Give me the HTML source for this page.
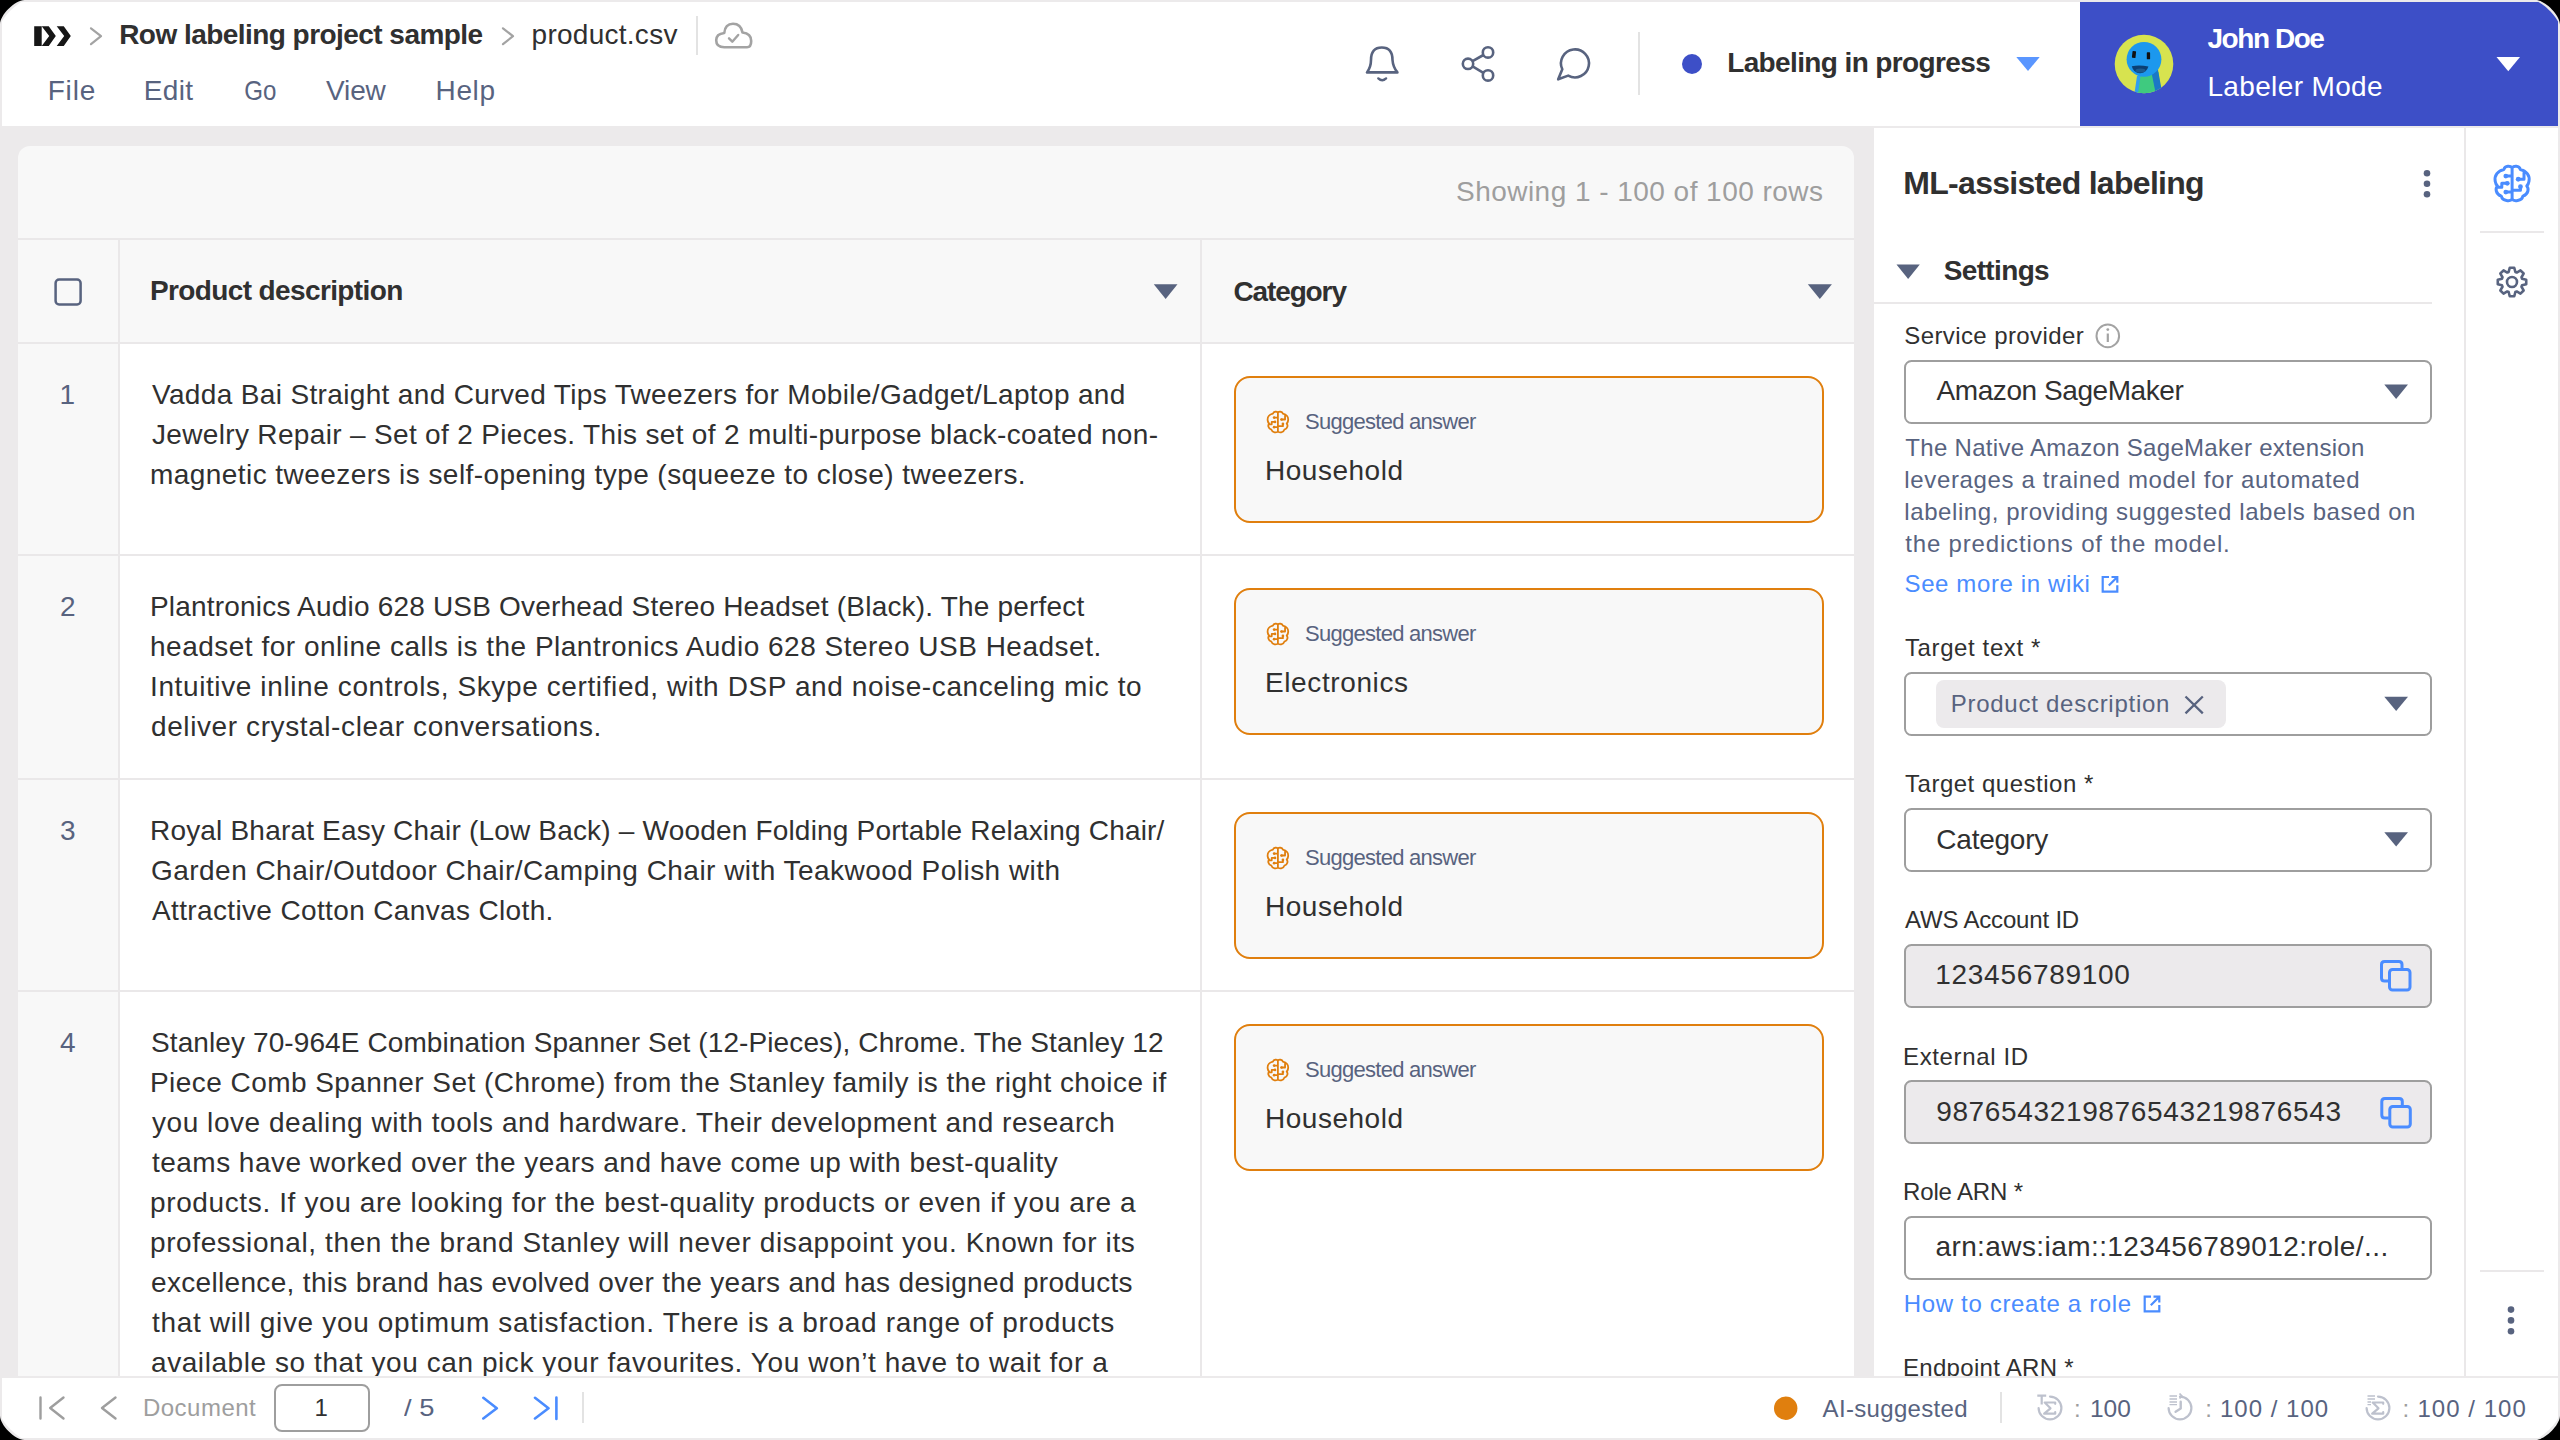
<!DOCTYPE html>
<html><head><meta charset="utf-8"><style>
html,body{margin:0;padding:0;background:#000;width:2560px;height:1440px;overflow:hidden;}
#page{position:absolute;left:0;top:0;width:2560px;height:1440px;overflow:hidden;background:#eceaeb;border-radius:0px;}
.t{position:absolute;white-space:nowrap;font-family:"Liberation Sans",sans-serif;}
svg{position:absolute;left:0;top:0;}
</style></head><body><div id="page">
<div style="position:absolute;left:2px;top:2px;width:2556px;height:124px;background:#ffffff;border-top-left-radius:0px;border-top-right-radius:0px"></div><div style="position:absolute;left:2080px;top:2px;width:478px;height:124px;background:#3d4fc7;border-top-right-radius:0px"></div><div style="position:absolute;left:18px;top:146px;width:1836px;height:1240px;background:#f8f8f8;border-top-left-radius:12px;border-top-right-radius:12px"></div><div style="position:absolute;left:120px;top:344px;width:1734px;height:1042px;background:#ffffff;"></div><div style="position:absolute;left:18px;top:238px;width:1836px;height:2px;background:#eae8e9;"></div><div style="position:absolute;left:18px;top:342px;width:1836px;height:2px;background:#eae8e9;"></div><div style="position:absolute;left:18px;top:554px;width:1836px;height:2px;background:#eae8e9;"></div><div style="position:absolute;left:18px;top:778px;width:1836px;height:2px;background:#eae8e9;"></div><div style="position:absolute;left:18px;top:990px;width:1836px;height:2px;background:#eae8e9;"></div><div style="position:absolute;left:118px;top:240px;width:2px;height:1146px;background:#eae8e9;"></div><div style="position:absolute;left:1200px;top:240px;width:2px;height:1146px;background:#eae8e9;"></div><div style="position:absolute;left:1874px;top:128px;width:684px;height:1258px;background:#ffffff;"></div><div style="position:absolute;left:2464px;top:128px;width:2px;height:1258px;background:#eae8e9;"></div><div style="position:absolute;left:1874px;top:302px;width:558px;height:2px;background:#eae8e9;"></div><div style="position:absolute;left:2480px;top:231px;width:64px;height:2px;background:#eae8e9;"></div><div style="position:absolute;left:2480px;top:1270px;width:64px;height:2px;background:#eae8e9;"></div><div style="position:absolute;left:696px;top:16px;width:2px;height:39px;background:#e3e3e3;"></div><div style="position:absolute;left:1638px;top:32px;width:2px;height:63px;background:#e3e3e3;"></div><div style="position:absolute;left:1234px;top:376px;width:590px;height:147px;box-sizing:border-box;border:2px solid #e07f0e;border-radius:16px;background:#f8f8f8"></div><div style="position:absolute;left:1234px;top:588px;width:590px;height:147px;box-sizing:border-box;border:2px solid #e07f0e;border-radius:16px;background:#f8f8f8"></div><div style="position:absolute;left:1234px;top:812px;width:590px;height:147px;box-sizing:border-box;border:2px solid #e07f0e;border-radius:16px;background:#f8f8f8"></div><div style="position:absolute;left:1234px;top:1024px;width:590px;height:147px;box-sizing:border-box;border:2px solid #e07f0e;border-radius:16px;background:#f8f8f8"></div><div style="position:absolute;left:1904px;top:360px;width:528px;height:64px;box-sizing:border-box;border:2px solid #9e9e9e;border-radius:7.5px;background:#ffffff"></div><div style="position:absolute;left:1904px;top:672px;width:528px;height:64px;box-sizing:border-box;border:2px solid #9e9e9e;border-radius:7.5px;background:#ffffff"></div><div style="position:absolute;left:1936px;top:680px;width:290px;height:48px;background:#eceaec;border-radius:8px"></div><div style="position:absolute;left:1904px;top:808px;width:528px;height:64px;box-sizing:border-box;border:2px solid #9e9e9e;border-radius:7.5px;background:#ffffff"></div><div style="position:absolute;left:1904px;top:944px;width:528px;height:64px;box-sizing:border-box;border:2px solid #9e9e9e;border-radius:7.5px;background:#eceaec"></div><div style="position:absolute;left:1904px;top:1080px;width:528px;height:64px;box-sizing:border-box;border:2px solid #9e9e9e;border-radius:7.5px;background:#eceaec"></div><div style="position:absolute;left:1904px;top:1216px;width:528px;height:64px;box-sizing:border-box;border:2px solid #9e9e9e;border-radius:7.5px;background:#ffffff"></div>
<svg width="2560" height="1440" viewBox="0 0 2560 1440"><path d="M34.2 26.2H48.75L55.8 36L48.75 45.9H34.2Z M41.7 26.2V45.9L49.2 36Z" fill="#161616" fill-rule="evenodd"/><path d="M56.7 26.2H63.75L70.8 36L63.75 45.9H56.7L64.2 36Z" fill="#161616"/><polyline points="91,28.3 101,36.2 91,44.2" fill="none" stroke="#a3a3a3" stroke-width="2.2" stroke-linecap="round" stroke-linejoin="round"/><polyline points="503,28.3 513,36.2 503,44.2" fill="none" stroke="#a3a3a3" stroke-width="2.2" stroke-linecap="round" stroke-linejoin="round"/><path d="M724.3 47.3H747Q751.2 47.3 751.2 41Q751.2 33.3 742.5 32.5Q741 23.7 733 23.7Q725 23.7 724.3 33Q716.2 33.8 716.2 40.3Q716.2 47.3 724.3 47.3Z" fill="none" stroke="#a3a3a3" stroke-width="2.6" stroke-linejoin="round"/><polyline points="729,38.3 732.3,41.7 738.2,35" fill="none" stroke="#a3a3a3" stroke-width="2.4" stroke-linecap="round" stroke-linejoin="round"/><path d="M1367 72.4H1397.4Q1393 67 1392.5 60Q1392.5 47.5 1381.8 47.5Q1371 47.5 1371 60Q1371 67 1367 72.4Z" fill="none" stroke="#58637f" stroke-width="2.6" stroke-linejoin="round"/><path d="M1378.3 78.4Q1382.2 82 1386.1 78.4" fill="none" stroke="#58637f" stroke-width="2.4" stroke-linecap="round"/><circle cx="1488" cy="52.4" r="5.2" fill="none" stroke="#58637f" stroke-width="2.6"/><circle cx="1468" cy="63.8" r="5.2" fill="none" stroke="#58637f" stroke-width="2.6"/><circle cx="1488" cy="75.4" r="5.2" fill="none" stroke="#58637f" stroke-width="2.6"/><path d="M1472.6 61.2L1483.4 55M1472.6 66.4L1483.4 72.8" stroke="#58637f" stroke-width="2.6"/><path d="M1562.3 69.3A14 14 0 1 1 1568.2 75.6L1558.2 79.3Z" fill="none" stroke="#58637f" stroke-width="2.6" stroke-linejoin="round"/><circle cx="1692" cy="64" r="10" fill="#3d4fc7"/><polygon points="2016.3,57 2039.7,57 2028.0,70.9" fill="#5a96ff"/><polygon points="2496.5,57 2520,57 2508.25,71.3" fill="#ffffff"/><circle cx="2144" cy="64" r="29.3" fill="#d7e34f"/><clipPath id="av"><circle cx="2144" cy="64" r="29.3"/></clipPath><g clip-path="url(#av)"><path d="M2138.5 74L2135.5 100H2162L2158.5 72Z" fill="#3fca7f"/><path d="M2153 55L2158 70L2163.5 100H2157L2151 70Z" fill="#1b78c6"/><path d="M2137 76L2133.5 100H2137L2140.5 76Z" fill="#2e9ff0"/><circle cx="2144" cy="59.3" r="17.4" fill="#1c98ee"/></g><rect x="2132.2" y="51" width="3.6" height="6.9" rx="0.6" fill="#111" transform="rotate(6 2134 54.5)"/><rect x="2146.8" y="52.3" width="3.3" height="7" rx="0.6" fill="#111"/><path d="M2131.8 66.2Q2140 64.8 2148.4 66.6Q2146.5 73.2 2140 73.2Q2133.5 73 2131.8 66.2Z" fill="#0b3f73"/><ellipse cx="2140.5" cy="70.6" rx="5" ry="2" fill="#1d5b8f"/><rect x="55.6" y="279.5" width="25" height="25" rx="3.5" fill="none" stroke="#58637f" stroke-width="2.5"/><polygon points="1153.8,284.2 1177.5,284.2 1165.65,299" fill="#58637f"/><polygon points="1807.8,284.2 1831.9,284.2 1819.85,299" fill="#58637f"/><polygon points="1896.5,264.5 1919.8,264.5 1908.15,279" fill="#58637f"/><polygon points="2384.3,384.6 2408,384.6 2396.15,398.90000000000003" fill="#58637f"/><polygon points="2384.3,696.7 2408,696.7 2396.15,711.0" fill="#58637f"/><polygon points="2384.3,832.3 2408,832.3 2396.15,846.5999999999999" fill="#58637f"/><circle cx="2427" cy="173.3" r="3.3" fill="#58637f"/><circle cx="2427" cy="183.8" r="3.3" fill="#58637f"/><circle cx="2427" cy="194.2" r="3.3" fill="#58637f"/><circle cx="2511" cy="1309.6" r="3.3" fill="#58637f"/><circle cx="2511" cy="1320.4" r="3.3" fill="#58637f"/><circle cx="2511" cy="1331.2" r="3.3" fill="#58637f"/><circle cx="2107.8" cy="335.9" r="11.3" fill="none" stroke="#a3a3a3" stroke-width="2"/><path d="M2107.8 333.5V342" stroke="#a3a3a3" stroke-width="2.2"/><circle cx="2107.8" cy="329.6" r="1.4" fill="#a3a3a3"/><path d="M2185.5 696.5L2202.8 713.3M2202.8 696.5L2185.5 713.3" stroke="#58637f" stroke-width="2.3"/><path d="M2109.0 577.0H2102.7V591.5999999999999H2117.3V585.3M2111.5 577.0H2117.3V582.8M2117.3 577.0L2108.8 585.5" fill="none" stroke="#4a8cff" stroke-width="2.2"/><path d="M2151.0 1296.7H2144.7V1311.3H2159.3V1305.0M2153.5 1296.7H2159.3V1302.5M2159.3 1296.7L2150.8 1305.2" fill="none" stroke="#4a8cff" stroke-width="2.2"/><path d="M2388.5 981H2384.5Q2381.5 981 2381.5 978V964.5Q2381.5 961.5 2384.5 961.5H2399Q2402 961.5 2402 964.5V968.5" fill="none" stroke="#4a8cff" stroke-width="3"/><rect x="2389.5" y="969.5" width="20.5" height="20.5" rx="3" fill="none" stroke="#4a8cff" stroke-width="3"/><path d="M2388.8 1118H2384.8Q2381.8 1118 2381.8 1115V1101.5Q2381.8 1098.5 2384.8 1098.5H2399.3Q2402.3 1098.5 2402.3 1101.5V1105.5" fill="none" stroke="#4a8cff" stroke-width="3"/><rect x="2389.8" y="1106.5" width="20.5" height="20.5" rx="3" fill="none" stroke="#4a8cff" stroke-width="3"/><g transform="translate(1266.3 410.5) scale(0.9666666666666667)"><path d="M12 2.2C11 0.9 7.6 0.7 6.9 3.2C3.2 4 0.8 7 1.5 10.6C1.7 11.9 2.2 12.9 2.9 13.5C1.4 15 1.8 18.6 5.3 19.8C6 23 11 23.3 12 21.6C13 23.3 18 23 18.7 19.8C22.2 18.6 22.6 15 21.1 13.5C21.8 12.9 22.3 11.9 22.5 10.6C23.2 7 20.8 4 17.1 3.2C16.4 0.7 13 0.9 12 2.2ZM12 2.2V21.6M12 7.3H8.3M8.8 11.8H5.6V14.3H2.9M12 17.3H8.3M15.6 9.3H19.4V5.3M17.2 13.9V16.2H12" fill="none" stroke="#e07f0e" stroke-width="1.8620689655172413" stroke-linejoin="round" stroke-linecap="round"/><circle cx="8.1" cy="7.3" r="1.396551724137931" fill="#e07f0e"/><circle cx="9.0" cy="11.8" r="1.396551724137931" fill="#e07f0e"/><circle cx="8.1" cy="17.3" r="1.396551724137931" fill="#e07f0e"/><circle cx="15.8" cy="9.3" r="1.396551724137931" fill="#e07f0e"/><circle cx="17.2" cy="13.9" r="1.396551724137931" fill="#e07f0e"/></g><g transform="translate(1266.3 622.5) scale(0.9666666666666667)"><path d="M12 2.2C11 0.9 7.6 0.7 6.9 3.2C3.2 4 0.8 7 1.5 10.6C1.7 11.9 2.2 12.9 2.9 13.5C1.4 15 1.8 18.6 5.3 19.8C6 23 11 23.3 12 21.6C13 23.3 18 23 18.7 19.8C22.2 18.6 22.6 15 21.1 13.5C21.8 12.9 22.3 11.9 22.5 10.6C23.2 7 20.8 4 17.1 3.2C16.4 0.7 13 0.9 12 2.2ZM12 2.2V21.6M12 7.3H8.3M8.8 11.8H5.6V14.3H2.9M12 17.3H8.3M15.6 9.3H19.4V5.3M17.2 13.9V16.2H12" fill="none" stroke="#e07f0e" stroke-width="1.8620689655172413" stroke-linejoin="round" stroke-linecap="round"/><circle cx="8.1" cy="7.3" r="1.396551724137931" fill="#e07f0e"/><circle cx="9.0" cy="11.8" r="1.396551724137931" fill="#e07f0e"/><circle cx="8.1" cy="17.3" r="1.396551724137931" fill="#e07f0e"/><circle cx="15.8" cy="9.3" r="1.396551724137931" fill="#e07f0e"/><circle cx="17.2" cy="13.9" r="1.396551724137931" fill="#e07f0e"/></g><g transform="translate(1266.3 846.5) scale(0.9666666666666667)"><path d="M12 2.2C11 0.9 7.6 0.7 6.9 3.2C3.2 4 0.8 7 1.5 10.6C1.7 11.9 2.2 12.9 2.9 13.5C1.4 15 1.8 18.6 5.3 19.8C6 23 11 23.3 12 21.6C13 23.3 18 23 18.7 19.8C22.2 18.6 22.6 15 21.1 13.5C21.8 12.9 22.3 11.9 22.5 10.6C23.2 7 20.8 4 17.1 3.2C16.4 0.7 13 0.9 12 2.2ZM12 2.2V21.6M12 7.3H8.3M8.8 11.8H5.6V14.3H2.9M12 17.3H8.3M15.6 9.3H19.4V5.3M17.2 13.9V16.2H12" fill="none" stroke="#e07f0e" stroke-width="1.8620689655172413" stroke-linejoin="round" stroke-linecap="round"/><circle cx="8.1" cy="7.3" r="1.396551724137931" fill="#e07f0e"/><circle cx="9.0" cy="11.8" r="1.396551724137931" fill="#e07f0e"/><circle cx="8.1" cy="17.3" r="1.396551724137931" fill="#e07f0e"/><circle cx="15.8" cy="9.3" r="1.396551724137931" fill="#e07f0e"/><circle cx="17.2" cy="13.9" r="1.396551724137931" fill="#e07f0e"/></g><g transform="translate(1266.3 1058.5) scale(0.9666666666666667)"><path d="M12 2.2C11 0.9 7.6 0.7 6.9 3.2C3.2 4 0.8 7 1.5 10.6C1.7 11.9 2.2 12.9 2.9 13.5C1.4 15 1.8 18.6 5.3 19.8C6 23 11 23.3 12 21.6C13 23.3 18 23 18.7 19.8C22.2 18.6 22.6 15 21.1 13.5C21.8 12.9 22.3 11.9 22.5 10.6C23.2 7 20.8 4 17.1 3.2C16.4 0.7 13 0.9 12 2.2ZM12 2.2V21.6M12 7.3H8.3M8.8 11.8H5.6V14.3H2.9M12 17.3H8.3M15.6 9.3H19.4V5.3M17.2 13.9V16.2H12" fill="none" stroke="#e07f0e" stroke-width="1.8620689655172413" stroke-linejoin="round" stroke-linecap="round"/><circle cx="8.1" cy="7.3" r="1.396551724137931" fill="#e07f0e"/><circle cx="9.0" cy="11.8" r="1.396551724137931" fill="#e07f0e"/><circle cx="8.1" cy="17.3" r="1.396551724137931" fill="#e07f0e"/><circle cx="15.8" cy="9.3" r="1.396551724137931" fill="#e07f0e"/><circle cx="17.2" cy="13.9" r="1.396551724137931" fill="#e07f0e"/></g><g transform="translate(2492.8 164.3) scale(1.6083333333333334)"><path d="M12 2.2C11 0.9 7.6 0.7 6.9 3.2C3.2 4 0.8 7 1.5 10.6C1.7 11.9 2.2 12.9 2.9 13.5C1.4 15 1.8 18.6 5.3 19.8C6 23 11 23.3 12 21.6C13 23.3 18 23 18.7 19.8C22.2 18.6 22.6 15 21.1 13.5C21.8 12.9 22.3 11.9 22.5 10.6C23.2 7 20.8 4 17.1 3.2C16.4 0.7 13 0.9 12 2.2ZM12 2.2V21.6M12 7.3H8.3M8.8 11.8H5.6V14.3H2.9M12 17.3H8.3M15.6 9.3H19.4V5.3M17.2 13.9V16.2H12" fill="none" stroke="#4a8cff" stroke-width="1.8652849740932642" stroke-linejoin="round" stroke-linecap="round"/><circle cx="8.1" cy="7.3" r="1.4922279792746114" fill="#4a8cff"/><circle cx="9.0" cy="11.8" r="1.4922279792746114" fill="#4a8cff"/><circle cx="8.1" cy="17.3" r="1.4922279792746114" fill="#4a8cff"/><circle cx="15.8" cy="9.3" r="1.4922279792746114" fill="#4a8cff"/><circle cx="17.2" cy="13.9" r="1.4922279792746114" fill="#4a8cff"/></g><polygon points="2508.64,271.95 2509.75,267.78 2514.25,267.78 2515.36,271.95 2516.73,272.51 2520.46,270.35 2523.65,273.54 2521.49,277.27 2522.05,278.64 2526.22,279.75 2526.22,284.25 2522.05,285.36 2521.49,286.73 2523.65,290.46 2520.46,293.65 2516.73,291.49 2515.36,292.05 2514.25,296.22 2509.75,296.22 2508.64,292.05 2507.27,291.49 2503.54,293.65 2500.35,290.46 2502.51,286.73 2501.95,285.36 2497.78,284.25 2497.78,279.75 2501.95,278.64 2502.51,277.27 2500.35,273.54 2503.54,270.35 2507.27,272.51" fill="none" stroke="#58637f" stroke-width="2.6" stroke-linejoin="round"/><circle cx="2512" cy="282" r="5" fill="none" stroke="#58637f" stroke-width="2.6"/></svg>
<div class="t" style="left:119.20px;top:20.60px;font-size:28px;line-height:28px;color:#303030;letter-spacing:-0.543px;font-weight:700">Row labeling project sample</div>
<div class="t" style="left:531.60px;top:20.60px;font-size:28px;line-height:28px;color:#303030;letter-spacing:0.263px">product.csv</div>
<div class="t" style="left:47.70px;top:76.80px;font-size:28px;line-height:28px;color:#58637f;letter-spacing:0.818px">File</div>
<div class="t" style="left:143.80px;top:76.80px;font-size:28px;line-height:28px;color:#58637f;letter-spacing:0.310px">Edit</div>
<div class="t" style="left:244.00px;top:76.80px;font-size:28px;line-height:28px;color:#58637f;transform-origin:1.00px 0;transform:scaleX(0.8611)">Go</div>
<div class="t" style="left:326.00px;top:76.80px;font-size:28px;line-height:28px;color:#58637f;letter-spacing:-0.121px">View</div>
<div class="t" style="left:435.50px;top:76.80px;font-size:28px;line-height:28px;color:#58637f;letter-spacing:0.662px">Help</div>
<div class="t" style="left:1727.20px;top:49.20px;font-size:28px;line-height:28px;color:#303030;letter-spacing:-0.621px;font-weight:700">Labeling in progress</div>
<div class="t" style="left:2207.50px;top:24.85px;font-size:28px;line-height:28px;color:#ffffff;letter-spacing:-1.455px;font-weight:700">John Doe</div>
<div class="t" style="left:2207.40px;top:73.10px;font-size:28px;line-height:28px;color:#ffffff;letter-spacing:0.359px">Labeler Mode</div>
<div class="t" style="left:1456.00px;top:177.60px;font-size:28px;line-height:28px;color:#9e9e9e;letter-spacing:0.466px">Showing 1 - 100 of 100 rows</div>
<div class="t" style="left:150.00px;top:277.30px;font-size:28px;line-height:28px;color:#303030;letter-spacing:-0.620px;font-weight:700">Product description</div>
<div class="t" style="left:1233.40px;top:277.60px;font-size:28px;line-height:28px;color:#303030;letter-spacing:-1.113px;font-weight:700">Category</div>
<div class="t" style="left:59.45px;top:381.00px;font-size:28px;line-height:28px;color:#58637f">1</div>
<div class="t" style="left:152.00px;top:381.00px;font-size:28px;line-height:28px;color:#303030;letter-spacing:0.351px">Vadda Bai Straight and Curved Tips Tweezers for Mobile/Gadget/Laptop and</div>
<div class="t" style="left:152.00px;top:421.00px;font-size:28px;line-height:28px;color:#303030;letter-spacing:0.334px">Jewelry Repair – Set of 2 Pieces. This set of 2 multi-purpose black-coated non-</div>
<div class="t" style="left:150.00px;top:461.00px;font-size:28px;line-height:28px;color:#303030;letter-spacing:0.439px">magnetic tweezers is self-opening type (squeeze to close) tweezers.</div>
<div class="t" style="left:1305.00px;top:410.75px;font-size:22px;line-height:22px;color:#58637f;letter-spacing:-0.727px">Suggested answer</div>
<div class="t" style="left:1265.00px;top:457.30px;font-size:28px;line-height:28px;color:#303030;letter-spacing:0.512px">Household</div>
<div class="t" style="left:59.95px;top:592.50px;font-size:28px;line-height:28px;color:#58637f">2</div>
<div class="t" style="left:150.00px;top:592.50px;font-size:28px;line-height:28px;color:#303030;letter-spacing:0.195px">Plantronics Audio 628 USB Overhead Stereo Headset (Black). The perfect</div>
<div class="t" style="left:150.00px;top:632.50px;font-size:28px;line-height:28px;color:#303030;letter-spacing:0.500px">headset for online calls is the Plantronics Audio 628 Stereo USB Headset.</div>
<div class="t" style="left:150.00px;top:672.50px;font-size:28px;line-height:28px;color:#303030;letter-spacing:0.609px">Intuitive inline controls, Skype certified, with DSP and noise-canceling mic to</div>
<div class="t" style="left:151.00px;top:712.50px;font-size:28px;line-height:28px;color:#303030;letter-spacing:0.597px">deliver crystal-clear conversations.</div>
<div class="t" style="left:1305.00px;top:622.75px;font-size:22px;line-height:22px;color:#58637f;letter-spacing:-0.727px">Suggested answer</div>
<div class="t" style="left:1265.00px;top:669.30px;font-size:28px;line-height:28px;color:#303030;letter-spacing:0.606px">Electronics</div>
<div class="t" style="left:59.95px;top:816.80px;font-size:28px;line-height:28px;color:#58637f">3</div>
<div class="t" style="left:150.00px;top:816.80px;font-size:28px;line-height:28px;color:#303030;letter-spacing:0.189px">Royal Bharat Easy Chair (Low Back) – Wooden Folding Portable Relaxing Chair/</div>
<div class="t" style="left:151.00px;top:856.80px;font-size:28px;line-height:28px;color:#303030;letter-spacing:0.466px">Garden Chair/Outdoor Chair/Camping Chair with Teakwood Polish with</div>
<div class="t" style="left:152.00px;top:896.80px;font-size:28px;line-height:28px;color:#303030;letter-spacing:0.359px">Attractive Cotton Canvas Cloth.</div>
<div class="t" style="left:1305.00px;top:846.75px;font-size:22px;line-height:22px;color:#58637f;letter-spacing:-0.727px">Suggested answer</div>
<div class="t" style="left:1265.00px;top:893.30px;font-size:28px;line-height:28px;color:#303030;letter-spacing:0.512px">Household</div>
<div class="t" style="left:59.95px;top:1029.00px;font-size:28px;line-height:28px;color:#58637f">4</div>
<div class="t" style="left:151.00px;top:1029.00px;font-size:28px;line-height:28px;color:#303030;letter-spacing:0.102px">Stanley 70-964E Combination Spanner Set (12-Pieces), Chrome. The Stanley 12</div>
<div class="t" style="left:150.00px;top:1069.00px;font-size:28px;line-height:28px;color:#303030;letter-spacing:0.444px">Piece Comb Spanner Set (Chrome) from the Stanley family is the right choice if</div>
<div class="t" style="left:152.00px;top:1109.00px;font-size:28px;line-height:28px;color:#303030;letter-spacing:0.547px">you love dealing with tools and hardware. Their development and research</div>
<div class="t" style="left:152.00px;top:1149.00px;font-size:28px;line-height:28px;color:#303030;letter-spacing:0.471px">teams have worked over the years and have come up with best-quality</div>
<div class="t" style="left:150.00px;top:1189.00px;font-size:28px;line-height:28px;color:#303030;letter-spacing:0.623px">products. If you are looking for the best-quality products or even if you are a</div>
<div class="t" style="left:150.00px;top:1229.00px;font-size:28px;line-height:28px;color:#303030;letter-spacing:0.609px">professional, then the brand Stanley will never disappoint you. Known for its</div>
<div class="t" style="left:151.00px;top:1269.00px;font-size:28px;line-height:28px;color:#303030;letter-spacing:0.329px">excellence, this brand has evolved over the years and has designed products</div>
<div class="t" style="left:152.00px;top:1309.00px;font-size:28px;line-height:28px;color:#303030;letter-spacing:0.665px">that will give you optimum satisfaction. There is a broad range of products</div>
<div class="t" style="left:151.00px;top:1349.00px;font-size:28px;line-height:28px;color:#303030;letter-spacing:0.574px">available so that you can pick your favourites. You won’t have to wait for a</div>
<div class="t" style="left:1305.00px;top:1058.75px;font-size:22px;line-height:22px;color:#58637f;letter-spacing:-0.727px">Suggested answer</div>
<div class="t" style="left:1265.00px;top:1105.30px;font-size:28px;line-height:28px;color:#303030;letter-spacing:0.512px">Household</div>
<div class="t" style="left:1903.30px;top:167.40px;font-size:32px;line-height:32px;color:#303030;letter-spacing:-0.705px;font-weight:700">ML-assisted labeling</div>
<div class="t" style="left:1943.70px;top:256.75px;font-size:28px;line-height:28px;color:#303030;letter-spacing:-0.640px;font-weight:700">Settings</div>
<div class="t" style="left:1904.30px;top:324.00px;font-size:24px;line-height:24px;color:#303030;letter-spacing:0.399px">Service provider</div>
<div class="t" style="left:1936.60px;top:377.30px;font-size:28px;line-height:28px;color:#303030;letter-spacing:-0.437px">Amazon SageMaker</div>
<div class="t" style="left:1905.30px;top:436.25px;font-size:24px;line-height:24px;color:#58637f;letter-spacing:0.299px">The Native Amazon SageMaker extension</div>
<div class="t" style="left:1904.30px;top:468.10px;font-size:24px;line-height:24px;color:#58637f;letter-spacing:0.643px">leverages a trained model for automated</div>
<div class="t" style="left:1904.30px;top:500.00px;font-size:24px;line-height:24px;color:#58637f;letter-spacing:0.579px">labeling, providing suggested labels based on</div>
<div class="t" style="left:1905.30px;top:531.90px;font-size:24px;line-height:24px;color:#58637f;letter-spacing:0.820px">the predictions of the model.</div>
<div class="t" style="left:1904.50px;top:571.90px;font-size:24px;line-height:24px;color:#4a8cff;letter-spacing:0.618px">See more in wiki</div>
<div class="t" style="left:1905.00px;top:636.00px;font-size:24px;line-height:24px;color:#303030;letter-spacing:0.606px">Target text *</div>
<div class="t" style="left:1950.70px;top:691.70px;font-size:24px;line-height:24px;color:#58637f;letter-spacing:0.739px">Product description</div>
<div class="t" style="left:1905.00px;top:772.30px;font-size:24px;line-height:24px;color:#303030;letter-spacing:0.514px">Target question *</div>
<div class="t" style="left:1936.30px;top:826.30px;font-size:28px;line-height:28px;color:#303030;letter-spacing:-0.230px">Category</div>
<div class="t" style="left:1905.00px;top:908.30px;font-size:24px;line-height:24px;color:#303030;letter-spacing:-0.177px">AWS Account ID</div>
<div class="t" style="left:1935.30px;top:961.30px;font-size:28px;line-height:28px;color:#303030;letter-spacing:0.700px">123456789100</div>
<div class="t" style="left:1903.00px;top:1045.00px;font-size:24px;line-height:24px;color:#303030;letter-spacing:0.642px">External ID</div>
<div class="t" style="left:1936.20px;top:1097.60px;font-size:28px;line-height:28px;color:#303030;letter-spacing:0.644px">9876543219876543219876543</div>
<div class="t" style="left:1903.00px;top:1180.30px;font-size:24px;line-height:24px;color:#303030;letter-spacing:-0.152px">Role ARN *</div>
<div class="t" style="left:1935.40px;top:1232.80px;font-size:28px;line-height:28px;color:#303030;letter-spacing:0.419px">arn:aws:iam::123456789012:role/...</div>
<div class="t" style="left:1903.80px;top:1292.20px;font-size:24px;line-height:24px;color:#4a8cff;letter-spacing:0.662px">How to create a role</div>
<div class="t" style="left:1903.00px;top:1356.20px;font-size:24px;line-height:24px;color:#303030;letter-spacing:0.296px">Endpoint ARN *</div>
<div style="position:absolute;left:2px;top:1376px;width:2556px;height:2px;background:#eceaeb;"></div><div style="position:absolute;left:2px;top:1378px;width:2556px;height:60px;background:#ffffff;border-bottom-left-radius:0px;border-bottom-right-radius:0px"></div><div style="position:absolute;left:274px;top:1384px;width:96px;height:48px;box-sizing:border-box;border:2px solid #9e9e9e;border-radius:8px;background:#ffffff"></div><div style="position:absolute;left:582px;top:1392px;width:2px;height:31px;background:#e3e3e3;"></div><div style="position:absolute;left:2000px;top:1392px;width:2px;height:31px;background:#e3e3e3;"></div>
<svg width="2560" height="1440" viewBox="0 0 2560 1440"><path d="M40.5 1397.5V1418.5M63.5 1397.5L50.2 1408L63.5 1418.5M115.5 1397.5L102 1408L115.5 1418.5" fill="none" stroke="#9e9e9e" stroke-width="2.4" stroke-linecap="round" stroke-linejoin="round"/><path d="M483.3 1397.8L496.8 1408.2L483.3 1418.5M535 1397.8L548.5 1408.2L535 1418.5M556.4 1397.5V1419" fill="none" stroke="#4a8cff" stroke-width="2.6" stroke-linecap="round" stroke-linejoin="round"/><circle cx="1785.7" cy="1408.2" r="11.7" fill="#e07f0e"/><path d="M2050 1396.6A11.4 11.4 0 1 1 2038.6 1408" fill="none" stroke="#bdc1cd" stroke-width="2.2" stroke-linecap="round"/><path d="M2055.2 1403.8V1402.5H2044.7L2050.5 1408.3L2044.2 1413.7H2055.2V1412.2" fill="none" stroke="#bdc1cd" stroke-width="2.2" stroke-linejoin="round" stroke-linecap="round"/><path d="M2037.3 1395.6H2046.2M2041.7 1395.6V1404.6" stroke="#bdc1cd" stroke-width="2.2"/><path d="M2180 1396.6A11.4 11.4 0 1 1 2168.6 1408" fill="none" stroke="#bdc1cd" stroke-width="2.2" stroke-linecap="round"/><path d="M2180.7 1401.8V1408.6L2175.6 1411.8" fill="none" stroke="#bdc1cd" stroke-width="2.4" stroke-linecap="round" stroke-linejoin="round"/><path d="M2169.5 1396H2177M2169.5 1399H2177M2169.5 1402H2177M2169.5 1404.6H2177" stroke="#bdc1cd" stroke-width="1.4"/><path d="M2179.5 1393.5L2181.8 1396L2179.5 1398.5" fill="none" stroke="#bdc1cd" stroke-width="1.8"/><path d="M2378 1396.6A11.4 11.4 0 1 1 2366.6 1408" fill="none" stroke="#bdc1cd" stroke-width="2.2" stroke-linecap="round"/><path d="M2383.2 1403.8V1402.5H2372.7L2378.5 1408.3L2372.2 1413.7H2383.2V1412.2" fill="none" stroke="#bdc1cd" stroke-width="2.2" stroke-linejoin="round" stroke-linecap="round"/><path d="M2367.5 1396H2375M2367.5 1399H2375M2367.5 1402H2371M2367.5 1404.6H2371" stroke="#bdc1cd" stroke-width="1.4"/></svg>
<div class="t" style="left:142.90px;top:1396.00px;font-size:24px;line-height:24px;color:#9e9e9e;letter-spacing:0.498px">Document</div>
<div class="t" style="left:314.45px;top:1395.80px;font-size:24px;line-height:24px;color:#303030">1</div>
<div class="t" style="left:404.10px;top:1396.00px;font-size:24px;line-height:24px;color:#58637f;transform-origin:0.00px 0;transform:scaleX(1.1386)">/ 5</div>
<div class="t" style="left:1822.60px;top:1396.60px;font-size:24px;line-height:24px;color:#58637f;letter-spacing:0.321px">AI-suggested</div>
<div class="t" style="left:2073.95px;top:1396.60px;font-size:24px;line-height:24px;color:#9e9e9e">:</div>
<div class="t" style="left:2090.00px;top:1396.60px;font-size:24px;line-height:24px;color:#58637f;transform-origin:2.00px 0;transform:scaleX(1.0212)">100</div>
<div class="t" style="left:2205.25px;top:1396.60px;font-size:24px;line-height:24px;color:#9e9e9e">:</div>
<div class="t" style="left:2220.00px;top:1396.60px;font-size:24px;line-height:24px;color:#58637f;letter-spacing:1.007px">100 / 100</div>
<div class="t" style="left:2402.50px;top:1396.60px;font-size:24px;line-height:24px;color:#9e9e9e">:</div>
<div class="t" style="left:2417.40px;top:1396.60px;font-size:24px;line-height:24px;color:#58637f;letter-spacing:1.032px">100 / 100</div>
<svg width="2560" height="1440" viewBox="0 0 2560 1440"><path d="M0 0H27.5C19 0 0 19 0 27.5Z" fill="#eceaeb" transform=""/><path d="M0 0H27.5C19 0 0 19 0 27.5Z" fill="#eceaeb" transform="translate(2560 0) scale(-1 1)"/><path d="M0 0H27.5C19 0 0 19 0 27.5Z" fill="#eceaeb" transform="translate(0 1440) scale(1 -1)"/><path d="M0 0H27.5C19 0 0 19 0 27.5Z" fill="#eceaeb" transform="translate(2560 1440) scale(-1 -1)"/><path d="M0 0H24.5C15 0 0 15 0 24.5Z" fill="#000" transform=""/><path d="M0 0H24.5C15 0 0 15 0 24.5Z" fill="#000" transform="translate(2560 0) scale(-1 1)"/><path d="M0 0H24.5C15 0 0 15 0 24.5Z" fill="#000" transform="translate(0 1440) scale(1 -1)"/><path d="M0 0H24.5C15 0 0 15 0 24.5Z" fill="#000" transform="translate(2560 1440) scale(-1 -1)"/></svg>
</div></body></html>
